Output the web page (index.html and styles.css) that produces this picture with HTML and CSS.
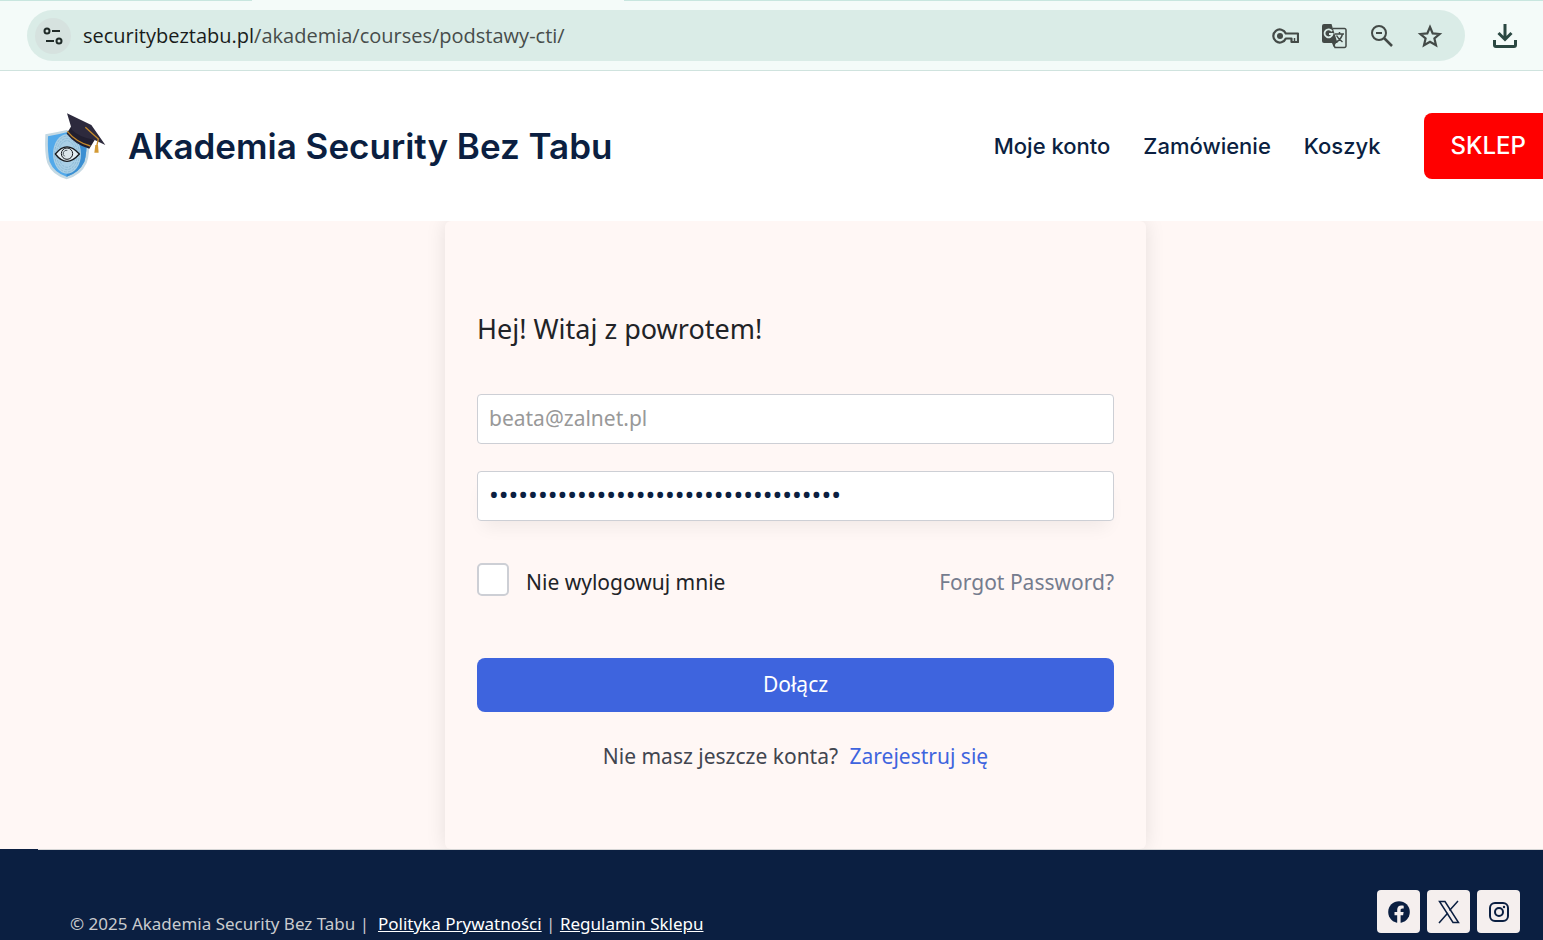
FILE: index.html
```html
<!DOCTYPE html>
<html lang="pl">
  <head>
    <meta charset="UTF-8" />
    <meta name="viewport" content="width=device-width, initial-scale=1.0" />
    <title>Akademia Security Bez Tabu</title>
    <link rel="stylesheet" href="styles.css">
  </head>
  <body>
    <!-- Browser toolbar -->
    <div class="toolbar">
      <div class="address-bar">
        <button class="site-info" aria-label="Informacje o witrynie">
          <svg width="20" height="20" viewBox="0 0 20 20" fill="none" stroke="#1f2a27" stroke-width="2">
            <circle cx="4" cy="5" r="2.5" />
            <path d="M9 5h8M3 15h8" />
            <circle cx="16" cy="15" r="2.5" />
          </svg>
        </button>
        <div class="url">securitybeztabu.pl<span class="url-path">/akademia/courses/podstawy-cti/</span></div>
        <div class="address-icons">
          <svg width="28" height="28" viewBox="0 0 28 28" fill="none" stroke="#434a47" stroke-width="2.2">
            <path d="M14.8 11.500A6.500 6.500 0 1 0 14.8 16.500H20.500V20H27V11.500Z" stroke-linejoin="round" />
            <path d="M23.500 20v-4" stroke-width="1.500" />
            <circle cx="9" cy="14" r="3" fill="#434a47" stroke="none" />
          </svg>
          <svg width="26" height="26" viewBox="0 0 26 26">
            <path d="M3 1h7.500l6 19H3a2 2 0 0 1-2-2V3a2 2 0 0 1 2-2z" fill="#434a47" />
            <path d="M11 8.300A4 4 0 1 0 11.500 11H8" fill="none" stroke="#daece7" stroke-width="1.800" />
            <path d="M11 19.500h4.500l-3 4.500z" fill="#434a47" />
            <path d="M12 5.500h11.500a1.500 1.500 0 0 1 1.500 1.500v16a1.500 1.500 0 0 1-1.500 1.500H14l-2-5" fill="none" stroke="#434a47" stroke-width="1.500" />
            <path d="M14 11h9M18.500 9v2M21.500 11c-1 4-3.500 6.500-6 8M15.500 12.500c1.500 3 4 5 6 6.500" fill="none" stroke="#434a47" stroke-width="1.500" />
          </svg>
          <svg width="26" height="26" viewBox="0 0 26 26" fill="none" stroke="#434a47" stroke-width="2">
            <circle cx="10" cy="10" r="7" />
            <path d="M7 10h6" />
            <path d="M15 15l8 8" stroke-width="2.500" />
          </svg>
          <svg width="26" height="26" viewBox="0 0 26 26" fill="none" stroke="#434a47" stroke-width="2.2">
            <path d="M13 4l2.700 6.400 6.900.6-5.200 4.500 1.600 6.800-6-3.600-6 3.600 1.600-6.800L3.400 11l6.900-.6z" />
          </svg>
        </div>
      </div>
      <button class="download" aria-label="Pobrane">
        <svg width="26" height="26" viewBox="0 0 26 26" fill="none" stroke="#2b4842" stroke-width="3">
          <path d="M13 1v15M6.500 10L13 16.500 19.500 10" />
          <path d="M2.500 17v5a1.500 1.500 0 0 0 1.500 1.500h18a1.500 1.500 0 0 0 1.500-1.500v-5" />
        </svg>
      </button>
    </div>

    <header class="site-header">
      <a class="brand" href="#">
        <svg class="brand-logo" width="64" height="70" viewBox="44 34 192 210">
          <path d="M48 104Q82 98 112 91Q140 102 180 105Q182 164 172 190Q156 226 112 239Q68 226 54 190Q45 164 48 104z" fill="#c5d9e3" />
          <path d="M56 110Q86 105 112 98Q138 108 172 112Q173 160 165 186Q150 218 112 231Q74 218 61 186Q54 160 56 110z" fill="#52a9ea" />
          <path d="M112 98V231Q150 218 165 186Q173 160 172 112Q138 108 112 98z" fill="#3b8fd2" />
          <ellipse cx="113" cy="163" rx="42" ry="59" fill="#a9cfe6" />
          <g fill="none" stroke="#7fb0cf" stroke-width="2" stroke-dasharray="9 3">
            <ellipse cx="113" cy="163" rx="37" ry="54" />
            <ellipse cx="113" cy="163" rx="31" ry="47" />
            <ellipse cx="113" cy="163" rx="25" ry="40" />
          </g>
          <path d="M78 163Q112 120 150 163Q112 207 78 163z" fill="#e3edf2" stroke="#15181c" stroke-width="4" />
          <circle cx="113" cy="162" r="17" fill="#dbe5ea" stroke="#15181c" stroke-width="3" />
          <path d="M106 170a10 10 0 0 1 8-18" fill="none" stroke="#4b555c" stroke-width="3" />
          <path d="M128 76L112 102Q138 135 180 147L196 121z" fill="#211f30" />
          <path d="M114 95Q140 127 183 139" fill="none" stroke="#c58a2b" stroke-width="4" />
          <path d="M113 41L186 76L228 136L196 121Q150 113 128 91z" fill="#2d2a3d" />
          <path d="M168 83L207 118L202 140" fill="none" stroke="#c58a2b" stroke-width="4" />
          <path d="M198 136h8l2 23h-13z" fill="#d39a35" />
        </svg>
        <span class="brand-name">Akademia Security Bez Tabu</span>
      </a>
      <nav class="site-nav">
        <a href="#">Moje konto</a>
        <a href="#">Zamówienie</a>
        <a href="#">Koszyk</a>
      </nav>
      <a class="shop-button" href="#">SKLEP</a>
    </header>

    <main class="content">
      <form class="login-card">
        <h1 class="login-title">Hej! Witaj z powrotem!</h1>
        <input class="field" type="text" aria-label="Nazwa użytkownika lub e-mail" placeholder="beata@zalnet.pl" />
        <input class="field field-password" type="password" aria-label="Hasło" value="abcdefghijklmnopqrstuvwxyz0123456789" />
        <div class="login-options">
          <input class="remember-box" type="checkbox" id="remember" />
          <label class="remember-label" for="remember">Nie wylogowuj mnie</label>
          <a class="forgot" href="#">Forgot Password?</a>
        </div>
        <button class="submit" type="submit">Dołącz</button>
        <p class="register">Nie masz jeszcze konta? <a href="#">Zarejestruj się</a></p>
      </form>
    </main>

    <footer class="site-footer">
      <p class="copyright">© 2025 Akademia Security Bez Tabu |&nbsp; <a href="#">Polityka Prywatności</a> | <a href="#">Regulamin Sklepu</a></p>
      <div class="social">
        <a href="#" aria-label="Facebook">
          <svg width="22" height="22" viewBox="0 0 22 22">
            <circle cx="11" cy="11" r="10.800" fill="#0b1f41" />
            <path d="M9.200 22v-7.700H6.500v-3.200h2.700V8.700c0-2.700 1.600-4.200 4.100-4.200.8 0 1.700.1 2.400.2v2.700h-1.400c-1.300 0-1.700.8-1.700 1.700v2h3l-.5 3.200h-2.500V22z" fill="#f5efee" />
          </svg>
        </a>
        <a href="#" aria-label="X">
          <svg width="22" height="24" viewBox="0 0 22 24" fill="none" stroke="#0b1f41" stroke-width="1.500">
            <path d="M1.500 1.500h5.500l13.500 21H15z" />
            <path d="M20 1l-8.500 9.500M9.800 13L1 23" />
          </svg>
        </a>
        <a href="#" aria-label="Instagram">
          <svg width="22" height="22" viewBox="0 0 22 22" fill="none" stroke="#0b1f41" stroke-width="2">
            <rect x="2" y="2" width="18" height="18" rx="5" />
            <circle cx="11" cy="11" r="4" />
            <circle cx="16" cy="6" r="1.200" fill="#0b1f41" stroke="none" />
          </svg>
        </a>
      </div>
    </footer>
  </body>
</html>
```
FILE: styles.css
```css
* {
  box-sizing: border-box;
}

body {
  margin: 0;
  min-height: 100vh;
  display: flex;
  flex-direction: column;
  font-family: "Noto Sans", sans-serif;
  font-size: 21px;
  color: #212327;
  background-color: #fff7f5;
}

a {
  text-decoration: none;
}

button {
  border: none;
  padding: 0;
  font-family: inherit;
  cursor: pointer;
}

/* browser toolbar */
.toolbar {
  display: flex;
  align-items: center;
  gap: 27px;
  height: 71px;
  padding: 1px 25px 0 27px;
  /* the top line breaks under the active tab */
  background: linear-gradient(90deg, #c8e6df 252px, #f4fbf9 252px 624px, #c8e6df 624px) top / 100% 1px no-repeat #f4fbf9;
  border-bottom: 1px solid #cfe3de;
}

.address-bar {
  flex: 1;
  display: flex;
  align-items: center;
  height: 51px;
  padding: 0 22px 0 8px;
  border-radius: 26px;
  background-color: #daece7;
}

.site-info {
  display: flex;
  align-items: center;
  justify-content: center;
  width: 36px;
  height: 36px;
  border-radius: 50%;
  background-color: #d6e2df;
}

.url {
  flex: 1;
  margin-left: 12px;
  font-family: "Open Sans", sans-serif;
  font-size: 20px;
  color: #191c1b;
}

.url-path {
  color: #474d4b;
}

.address-icons {
  display: flex;
  align-items: center;
  gap: 22px;
}

.download {
  display: flex;
  background: none;
}

/* site header */
.site-header {
  display: flex;
  align-items: center;
  height: 150px;
  padding-left: 44px;
  background-color: #fff;
  font-family: Inter, sans-serif;
}

.brand {
  display: flex;
  align-items: center;
  gap: 20px;
  color: #0b1f41;
}

.brand-name {
  font-size: 35px;
  font-weight: 600;
}

.site-nav {
  display: flex;
  gap: 33px;
  margin-left: auto;
}

.site-nav a {
  color: #0b1f41;
  font-size: 22px;
  font-weight: 500;
}

.shop-button {
  margin-left: 43px;
  padding: 0 17px 0 27px;
  border-radius: 8px 0 0 8px;
  background-color: #f00;
  color: #fff;
  font-size: 24px;
  font-weight: 500;
  line-height: 66px;
}

/* login form */
.content {
  flex: 1;
  display: flex;
  justify-content: center;
  padding-left: 48px;
  overflow: hidden;
}

.login-card {
  display: flex;
  flex-direction: column;
  width: 100%;
  max-width: 701px;
  padding: 90px 32px 77px;
  border-radius: 6px;
  background-color: #fff7f5;
  box-shadow: 0 0 20px rgba(0, 0, 0, 0.1);
}

.login-title {
  margin: 0 0 47px;
  font-size: 27px;
  font-weight: 400;
  line-height: 36px;
}

.field {
  width: 100%;
  height: 50px;
  margin-bottom: 27px;
  padding: 0 11px 2px;
  border: 1px solid #cdcfd5;
  border-radius: 4px;
  background-color: #fff;
  color: #0b1f41;
  font-family: inherit;
  font-size: 21px;
}

.field::placeholder {
  color: #999;
}

.field-password {
  margin-bottom: 42px;
  padding-bottom: 5px;
  font-size: 26px;
  box-shadow: 0 12px 18px -6px rgba(0, 0, 0, 0.06);
}

.login-options {
  display: flex;
  align-items: center;
  height: 33px;
  margin-bottom: 62px;
}

.remember-box {
  appearance: none;
  width: 32px;
  height: 33px;
  margin: 0 17px 0 0;
  border: 2px solid #cdcfd5;
  border-radius: 5px;
  background-color: #fff;
}

.remember-label,
.forgot {
  padding-top: 5px;
}

.forgot {
  margin-left: auto;
  color: #757c8e;
}

.submit {
  height: 54px;
  padding-bottom: 3px;
  border-radius: 8px;
  background-color: #3e64de;
  color: #fff;
  font-size: 21px;
}

.register {
  margin: 28px 0 0;
  text-align: center;
  line-height: 32px;
  color: #41454f;
}

.register a {
  margin-left: 6px;
  color: #3e64de;
}

/* footer */
.site-footer {
  display: flex;
  justify-content: space-between;
  height: 91px;
  padding: 41px 23px 0 70px;
  background: linear-gradient(#d5d5d5, #d5d5d5) 38px 0 / 100% 1px no-repeat #0b1f41;
}

.copyright {
  align-self: flex-end;
  margin: 0;
  font-size: 17px;
  line-height: 32px;
  color: #c9cbce;
}

.copyright a {
  color: #fff;
  text-decoration: underline;
}

.social {
  display: flex;
  gap: 7px;
}

.social a {
  display: flex;
  align-items: center;
  justify-content: center;
  width: 43px;
  height: 43px;
  border-radius: 4px;
  background-color: #f5efee;
}
```
